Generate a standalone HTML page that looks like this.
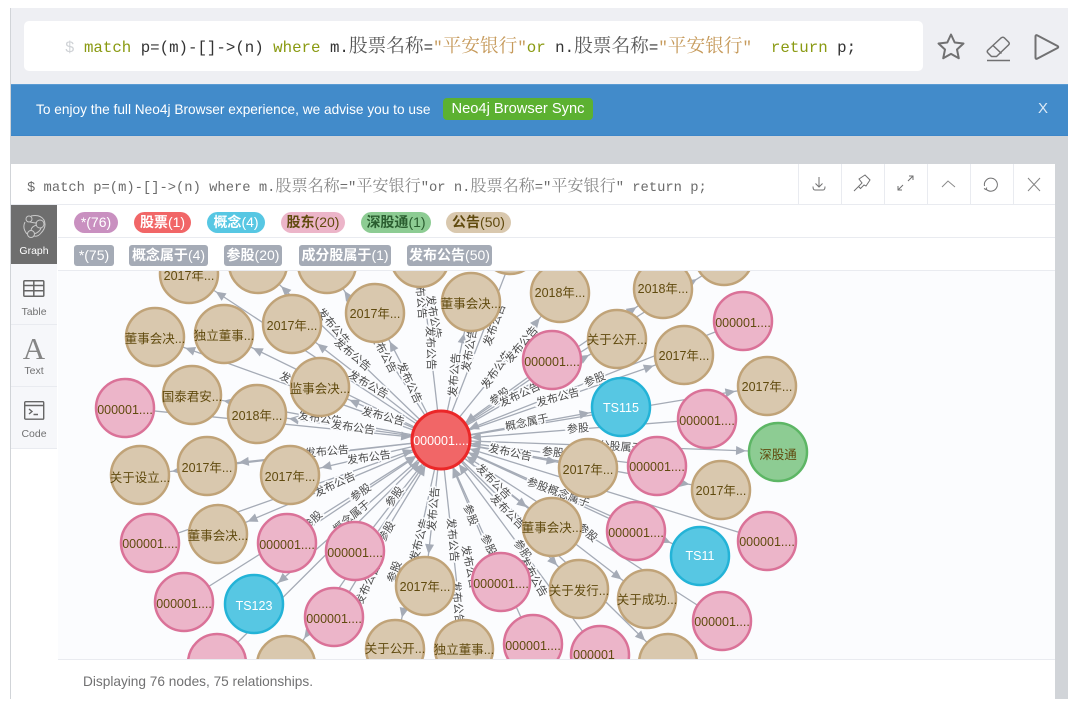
<!DOCTYPE html>
<html><head><meta charset="utf-8"><style>
html,body{margin:0;padding:0;background:#fff}
body{width:1072px;height:715px;overflow:hidden;position:relative;font-family:"Liberation Sans","Noto Sans CJK SC",sans-serif}
div,span.a{position:absolute;box-sizing:border-box}
.m{font-family:"Liberation Mono",monospace;white-space:pre}
.c1{font-family:"Noto Serif CJK SC",serif;font-size:18.7px}
.c2{font-family:"Noto Serif CJK SC",serif;font-size:16.100px}
.k{color:#8a9a12}.s{color:#c69a5b}
.chip{height:21px;top:212px;border-radius:11px;font-size:14px;line-height:20px;text-align:center;white-space:nowrap}
.rel{height:21px;top:245px;border-radius:3px;background:#a5abb6;color:#fff;font-size:14px;line-height:21px;text-align:center;white-space:nowrap}
b{font-weight:700}
.tab{left:11px;width:46px;background:#f6f7fa;border-bottom:1px solid #e9ebf0;color:#717172;font-size:10.5px;text-align:center}
.dv{top:164px;width:1px;height:40px;background:#e9ebf0}
svg{position:absolute;overflow:hidden}
.ic{fill:none;stroke:#717172}
</style></head><body>
<div style="left:10px;top:8px;width:1058px;height:691px;background:#d1d4d8"></div>
<div style="left:11px;top:8px;width:1057px;height:76px;background:#eeeff3"></div>
<div style="left:24px;top:21px;width:899px;height:50px;background:#fff;border-radius:5px"></div>
<div class="m" style="left:65px;top:20px;height:50px;line-height:50px;font-size:15.78px;color:#333"><span style="color:#cfd2d6">$</span> <span class="k">match</span> p=(m)-[]-&gt;(n) <span class="k">where</span> m.<span class="c1" style="color:#555">股票名称</span>=<span class="s">"<span class="c1">平安银行</span>"</span><span class="k">or</span> n.<span class="c1" style="color:#555">股票名称</span>=<span class="s">"<span class="c1">平安银行</span>"</span>  <span class="k">return</span> p;</div>
<svg style="left:936px;top:30px" width="124" height="34" viewBox="0 0 124 34" class="ic" stroke-width="2" stroke-linejoin="round">
<path d="M15 4.500l3.700 8 8.800 1-6.500 6 1.800 8.800-7.800-4.400-7.800 4.400 1.800-8.800-6.500-6 8.800-1z"/>
<path d="M52 20l13-12q2-1.500 3.500 0l4 4q1.500 1.500 0 3l-12 11.500h-5l-3.500-3.500q-1.500-1.500 0-3zM57 15.500l8.500 8M51 30.500h23" stroke-width="1.500"/>
<path d="M99.500 6.500q0-2 2-1l20 10.500q1.500 1 0 2l-20 10.500q-2 1-2-1z"/>
</svg>
<div style="left:11px;top:84px;width:1057px;height:52px;background:#428bca;border-top:1px solid #5a9bd3;border-bottom:1px solid #3d86c8"></div>
<div style="left:36px;top:84px;height:51px;line-height:51px;color:#fff;font-size:13.68px;white-space:nowrap">To enjoy the full Neo4j Browser experience, we advise you to use</div>
<div style="left:443px;top:98px;width:150px;height:22px;background:#5cb131;border-radius:4px;color:#fff;font-size:14.700px;line-height:23px;text-align:center;white-space:nowrap">Neo4j Browser Sync</div>
<div style="left:1038px;top:84px;height:51px;line-height:50px;color:#dce9f5;font-size:15px">X</div>

<div style="left:11px;top:164px;width:1044px;height:535px;background:#fff"></div>
<div class="m" style="left:27px;top:163px;height:40px;line-height:42px;font-size:13.8px;color:#6b6b6b">$ match p=(m)-[]-&gt;(n) where m.<span class="c2" style="color:#888">股票名称</span>="<span class="c2" style="color:#888">平安银行</span>"or n.<span class="c2" style="color:#888">股票名称</span>="<span class="c2" style="color:#888">平安银行</span>" return p;</div>
<div class="dv" style="left:798px"></div><div class="dv" style="left:841px"></div><div class="dv" style="left:884px"></div><div class="dv" style="left:927px"></div><div class="dv" style="left:970px"></div><div class="dv" style="left:1013px"></div>
<svg style="left:798px;top:164px" width="257" height="40" viewBox="0 0 257 40" class="ic" stroke-width="1">
<path d="M21 13v10M17.500 19.500l3.500 3.500 3.500-3.500M15 22.500q0 3.500 2 3.500h8q2 0 2-3.500" />
<path d="M61 15l6-4 5 5-4 6-2-1-3.500 3.500-2-2 3.500-3.500zM56 27l5-5" />
<path d="M100 26l5-5M100 22v4h4M110 17l5-5M111 12h4v4" />
<path d="M144 23l6-6 7 6" stroke="#8a8a8a"/>
<path d="M188 25a6.500 6.500 0 1 0-1.500-3M186 24.500l2 1 .8-2" />
<path d="M230 14l12 13M242 14l-12 13" stroke="#858585"/>
</svg>
<div style="left:11px;top:204px;width:1044px;height:1px;background:#e9ebf0"></div>

<div style="left:11px;top:205px;width:46px;height:454px;background:#fff"></div>
<div class="tab" style="top:205px;height:59px;background:#6e6e6e;color:#fff;border:0"><span class="a" style="left:0;right:0;top:40px">Graph</span></div>
<svg style="left:22px;top:214px" width="24" height="26" viewBox="0 0 24 26" fill="none" stroke="#c9c9c9" stroke-width="1"><circle cx="7" cy="5" r="3"/><circle cx="18" cy="10" r="4"/><circle cx="9" cy="20" r="3.500"/><path d="M9 2q9-2 13 4q3 7-3 13q-3 4-7 3M3 8q-3 6 2 12M12 20q6-2 7-6M8 8q4 1 7 1M9 16q1-4 6-5"/></svg>
<div class="tab" style="top:264px;height:61px;color:#717172"><span class="a" style="left:0;right:0;top:42px">Table</span></div>
<svg style="left:23px;top:280px" width="22" height="18" viewBox="0 0 22 18" fill="none" stroke="#666" stroke-width="1.500"><rect x=".8" y=".8" width="20" height="15.500" rx="1"/><path d="M.8 5.500h20M.8 10.800h20M10.800 .8v15.500"/></svg>
<div class="tab" style="top:325px;height:62px"><span class="a" style="left:0;right:0;top:40px">Text</span></div>
<div style="left:11px;top:333px;width:46px;text-align:center;font-family:'Liberation Serif',serif;font-size:31px;color:#858585;line-height:32px">A</div>
<div class="tab" style="top:387px;height:62px"><span class="a" style="left:0;right:0;top:41px">Code</span></div>
<svg style="left:24px;top:401px" width="22" height="20" viewBox="0 0 22 20" fill="none" stroke="#666" stroke-width="1.400"><rect x=".7" y=".7" width="19" height="17.500" rx="1"/><path d="M.7 4.500h19M5 8l3 2.500-3 2.500M9.500 13.500h4.500"/></svg>

<div class="chip" style="left:74px;width:44px;background:#c990c0;color:#fff">*(76)</div>
<div class="chip" style="left:134px;width:57px;background:#f16667;color:#fff"><b>股票</b>(1)</div>
<div class="chip" style="left:207px;width:58px;background:#57c7e3;color:#fff"><b>概念</b>(4)</div>
<div class="chip" style="left:281px;width:64px;background:#ecb5c9;color:#604a0e"><b>股东</b>(20)</div>
<div class="chip" style="left:361px;width:70px;background:#8dcc93;color:#2a5d2f"><b>深股通</b>(1)</div>
<div class="chip" style="left:446px;width:65px;background:#d9c8ae;color:#604a0e"><b>公告</b>(50)</div>
<div style="left:58px;top:237px;width:997px;height:1px;background:#e9ebf0"></div>
<div class="rel" style="left:74px;width:40px">*(75)</div>
<div class="rel" style="left:129px;width:79px"><b>概念属于</b>(4)</div>
<div class="rel" style="left:224px;width:58px"><b>参股</b>(20)</div>
<div class="rel" style="left:299px;width:92px"><b>成分股属于</b>(1)</div>
<div class="rel" style="left:407px;width:85px"><b>发布公告</b>(50)</div>
<div style="left:58px;top:270px;width:997px;height:1px;background:#e9ebf0"></div>

<svg style="left:58px;top:271px;background:#fbfcfe" width="997" height="388" viewBox="58 271 997 388">
<defs>
<marker id="o" markerUnits="userSpaceOnUse" orient="auto" overflow="visible" markerWidth="1" markerHeight="1"><path d="M-32 0L-42-4.500V4.500z" fill="#a5abb6"/></marker>
<marker id="i" markerUnits="userSpaceOnUse" orient="auto" overflow="visible" markerWidth="1" markerHeight="1"><path d="M30 0L40-4.500V4.500z" fill="#a5abb6"/></marker>
</defs>
<g fill="none" stroke="#a5abb6" stroke-width="1.300" marker-end="url(#o)">
<path d="M441 440L189 274"/><path d="M441 440L258 264"/><path d="M441 440L327 264"/><path d="M441 440L420 258"/><path d="M441 440L471 302"/><path d="M441 440L375 313"/><path d="M441 440L292 324"/><path d="M441 440L224 334"/><path d="M441 440L155 337"/><path d="M441 440L320 387"/><path d="M441 440L192 395"/><path d="M441 440L257 414"/><path d="M441 440L560 293"/><path d="M441 440L663 289"/><path d="M441 440L617 339"/><path d="M441 440L684 355"/><path d="M441 440L767 386"/><path d="M441 440L207 466"/><path d="M441 440L290 475"/><path d="M441 440L140 475"/><path d="M441 440L588 468"/><path d="M441 440L721 490"/><path d="M441 440L218 534"/><path d="M441 440L552 527"/><path d="M441 440L579 589"/><path d="M441 440L647 599"/><path d="M441 440L425 586"/><path d="M441 440L395 649"/><path d="M441 440L464 649"/><path d="M441 440L286 665"/><path d="M441 440L668 663"/><path d="M441 440L724 262"/><path d="M441 440L510 262"/><path d="M441 440L621 407"/><path d="M441 440L700 556"/><path d="M441 440L254 604"/><path d="M441 440L778 452"/>
</g>
<g fill="none" stroke="#a5abb6" stroke-width="1.300" marker-start="url(#i)">
<path d="M441 440L743 321"/><path d="M441 440L552 360"/><path d="M441 440L707 419"/><path d="M441 440L125 408"/><path d="M441 440L657 466"/><path d="M441 440L636 531"/><path d="M441 440L767 541"/><path d="M441 440L150 543"/><path d="M441 440L287 543"/><path d="M441 440L355 551"/><path d="M441 440L184 602"/><path d="M441 440L334 617"/><path d="M441 440L501 582"/><path d="M441 440L722 621"/><path d="M441 440L533 644"/><path d="M441 440L600 655"/><path d="M441 440L217 663"/>
</g>
<g font-size="11" fill="#4a4a4a" stroke="#fbfcfe" stroke-width="3" paint-order="stroke" text-anchor="middle" dominant-baseline="central" font-family="'Liberation Sans','Noto Sans CJK SC',sans-serif">
<text transform="translate(333 327) rotate(50)">发布公告</text>
<text transform="translate(352 355) rotate(40)">发布公告</text>
<text transform="translate(368 385) rotate(30)">发布公告</text>
<text transform="translate(383 417) rotate(15)">发布公告</text>
<text transform="translate(320 419) rotate(8)">发布公告</text>
<text transform="translate(353 428) rotate(8)">发布公告</text>
<text transform="translate(300 385) rotate(25)">发布公告</text>
<text transform="translate(383 353) rotate(62)">发布公告</text>
<text transform="translate(409 383) rotate(65)">发布公告</text>
<text transform="translate(420 297) rotate(85)">发布公告</text>
<text transform="translate(433 317) rotate(80)">发布公告</text>
<text transform="translate(430 348) rotate(88)">发布公告</text>
<text transform="translate(455 375) rotate(-85)">发布公告</text>
<text transform="translate(470 350) rotate(-80)">发布公告</text>
<text transform="translate(495 325) rotate(-70)">发布公告</text>
<text transform="translate(497 370) rotate(-55)">发布公告</text>
<text transform="translate(522 345) rotate(-50)">发布公告</text>
<text transform="translate(500 397) rotate(-35)">参股</text>
<text transform="translate(520 395) rotate(-25)">发布公告</text>
<text transform="translate(558 398) rotate(-15)">发布公告</text>
<text transform="translate(595 380) rotate(-22)">参股</text>
<text transform="translate(527 423) rotate(-12)">概念属于</text>
<text transform="translate(578 429) rotate(-5)">参股</text>
<text transform="translate(510 453) rotate(12)">发布公告</text>
<text transform="translate(553 453) rotate(5)">参股</text>
<text transform="translate(327 452) rotate(-5)">发布公告</text>
<text transform="translate(369 458) rotate(-8)">发布公告</text>
<text transform="translate(335 485) rotate(-25)">发布公告</text>
<text transform="translate(361 493) rotate(-35)">参股</text>
<text transform="translate(313 521) rotate(-45)">参股</text>
<text transform="translate(395 497) rotate(-55)">参股</text>
<text transform="translate(387 532) rotate(-60)">参股</text>
<text transform="translate(352 517) rotate(-40)">概念属于</text>
<text transform="translate(420 540) rotate(-75)">发布公告</text>
<text transform="translate(434 509) rotate(-85)">发布公告</text>
<text transform="translate(452 540) rotate(85)">发布公告</text>
<text transform="translate(469 567) rotate(78)">发布公告</text>
<text transform="translate(457 603) rotate(85)">发布公告</text>
<text transform="translate(470 515) rotate(70)">参股</text>
<text transform="translate(488 545) rotate(65)">参股</text>
<text transform="translate(493 482) rotate(45)">发布公告</text>
<text transform="translate(507 512) rotate(45)">发布公告</text>
<text transform="translate(522 550) rotate(55)">参股</text>
<text transform="translate(533 577) rotate(60)">发布公告</text>
<text transform="translate(558 493) rotate(20)">参股概念属于</text>
<text transform="translate(587 533) rotate(40)">参股</text>
<text transform="translate(395 572) rotate(-70)">参股</text>
<text transform="translate(368 585) rotate(-65)">发布公告</text>
<text transform="translate(615 447) rotate(4)">成分股属于</text>
</g>
<g fill="#d9c8ae" stroke="#c0a378" stroke-width="2.500">
<circle cx="189" cy="274" r="29"/><circle cx="258" cy="264" r="29"/><circle cx="327" cy="264" r="29"/><circle cx="420" cy="258" r="29"/><circle cx="510" cy="245" r="29"/><circle cx="471" cy="302" r="29"/><circle cx="375" cy="313" r="29"/><circle cx="292" cy="324" r="29"/><circle cx="224" cy="334" r="29"/><circle cx="155" cy="337" r="29"/><circle cx="320" cy="387" r="29"/><circle cx="192" cy="395" r="29"/><circle cx="257" cy="414" r="29"/><circle cx="560" cy="293" r="29"/><circle cx="663" cy="289" r="29"/><circle cx="617" cy="339" r="29"/><circle cx="684" cy="355" r="29"/><circle cx="767" cy="386" r="29"/><circle cx="207" cy="466" r="29"/><circle cx="290" cy="475" r="29"/><circle cx="140" cy="475" r="29"/><circle cx="588" cy="468" r="29"/><circle cx="721" cy="490" r="29"/><circle cx="218" cy="534" r="29"/><circle cx="552" cy="527" r="29"/><circle cx="579" cy="589" r="29"/><circle cx="647" cy="599" r="29"/><circle cx="425" cy="586" r="29"/><circle cx="395" cy="649" r="29"/><circle cx="464" cy="649" r="29"/><circle cx="286" cy="665" r="29"/><circle cx="668" cy="663" r="29"/><circle cx="724" cy="256" r="29"/>
</g>
<g fill="#ecb5c9" stroke="#da7298" stroke-width="2.500">
<circle cx="743" cy="321" r="29"/><circle cx="552" cy="360" r="29"/><circle cx="707" cy="419" r="29"/><circle cx="125" cy="408" r="29"/><circle cx="657" cy="466" r="29"/><circle cx="636" cy="531" r="29"/><circle cx="767" cy="541" r="29"/><circle cx="150" cy="543" r="29"/><circle cx="287" cy="543" r="29"/><circle cx="355" cy="551" r="29"/><circle cx="184" cy="602" r="29"/><circle cx="334" cy="617" r="29"/><circle cx="501" cy="582" r="29"/><circle cx="722" cy="621" r="29"/><circle cx="533" cy="644" r="29"/><circle cx="600" cy="655" r="29"/><circle cx="217" cy="663" r="29"/>
</g>
<g fill="#57c7e3" stroke="#23b3d7" stroke-width="2.500"><circle cx="621" cy="407" r="29"/><circle cx="700" cy="556" r="29"/><circle cx="254" cy="604" r="29"/></g>
<circle cx="778" cy="452" r="29" fill="#8dcc93" stroke="#5db665" stroke-width="2.500"/>
<circle cx="441" cy="440" r="29" fill="#f16667" stroke="#eb2728" stroke-width="3"/>
<g font-size="12.500" fill="#604a0e" text-anchor="middle" dominant-baseline="central" font-family="'Liberation Sans','Noto Sans CJK SC',sans-serif">
<text x="189" y="276">2017年...</text><text x="471" y="304">董事会决...</text><text x="375" y="314">2017年...</text><text x="292" y="326">2017年...</text><text x="224" y="336">独立董事...</text><text x="155" y="339">董事会决...</text><text x="320" y="389">监事会决...</text><text x="192" y="397">国泰君安...</text><text x="257" y="416">2018年...</text><text x="560" y="293">2018年...</text><text x="663" y="289">2018年...</text><text x="617" y="340">关于公开...</text><text x="684" y="356">2017年...</text><text x="767" y="387">2017年...</text><text x="207" y="468">2017年...</text><text x="290" y="477">2017年...</text><text x="140" y="478">关于设立...</text><text x="588" y="470">2017年...</text><text x="721" y="491">2017年...</text><text x="218" y="536">董事会决...</text><text x="552" y="528">董事会决...</text><text x="579" y="591">关于发行...</text><text x="647" y="600">关于成功...</text><text x="425" y="587">2017年...</text><text x="395" y="649">关于公开...</text><text x="464" y="650">独立董事...</text>
<text x="743" y="323">000001....</text><text x="552" y="362">000001....</text><text x="707" y="421">000001....</text><text x="125" y="410">000001....</text><text x="657" y="467">000001....</text><text x="636" y="533">000001....</text><text x="767" y="542">000001....</text><text x="150" y="544">000001....</text><text x="287" y="545">000001....</text><text x="355" y="553">000001....</text><text x="184" y="604">000001....</text><text x="334" y="619">000001....</text><text x="501" y="584">000001....</text><text x="722" y="622">000001....</text><text x="533" y="646">000001....</text><text x="594" y="655">000001</text>
<text x="778" y="455" fill="#604a0e">深股通</text>
<text x="621" y="408" fill="#fff">TS115</text><text x="700" y="556" fill="#fff">TS11</text><text x="254" y="606" fill="#fff">TS123</text><text x="441" y="441" fill="#fff">000001....</text>
</g>
</svg>
<div style="left:58px;top:659px;width:997px;height:1px;background:#e9ebf0"></div>
<div style="left:83px;top:660px;height:40px;line-height:43px;font-size:13.67px;color:#717172;white-space:nowrap">Displaying 76 nodes, 75 relationships.</div>
</body></html>
